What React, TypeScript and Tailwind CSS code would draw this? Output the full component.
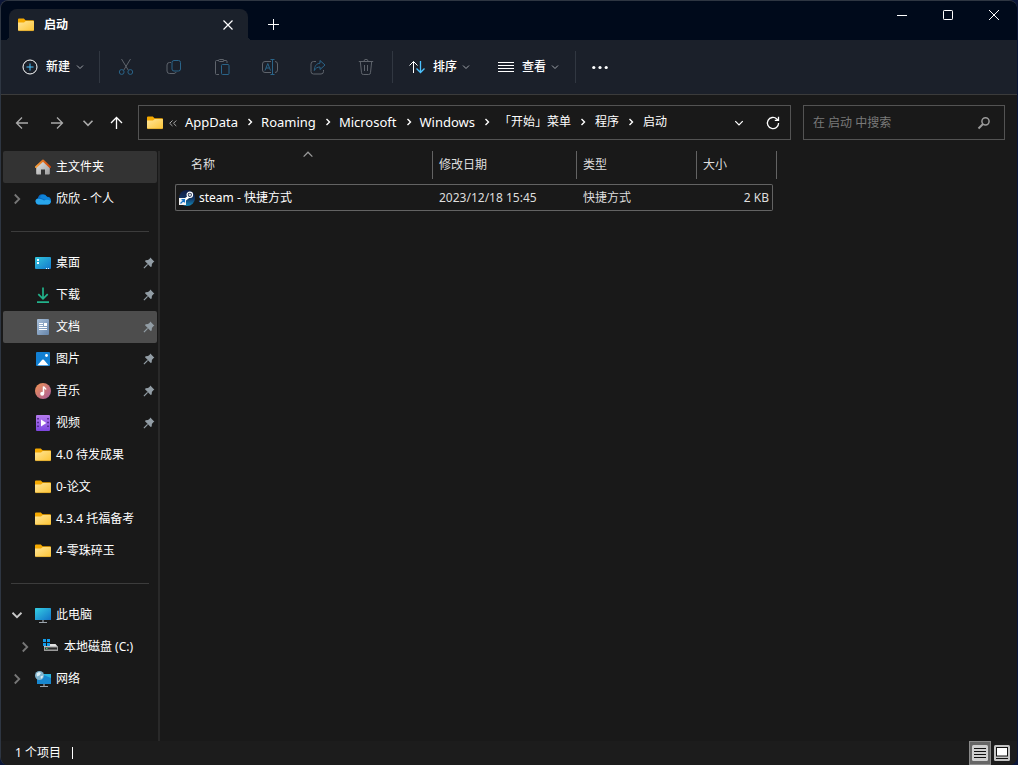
import type { ReactNode } from "react";

const FolderIcon = () => (
    <svg className="size-4 shrink-0" viewBox="0 0 16 16">
        <defs>
            <linearGradient id="folder" x1="0" y1="0" x2="1" y2="1">
                <stop offset="0" stopColor="#ffe69a" />
                <stop offset="1" stopColor="#fcc435" />
            </linearGradient>
        </defs>
        <path d="M0 2.600a1 1 0 0 1 1-1h4.800l1.800 1.600H15a1 1 0 0 1 1 1V8H0z" fill="#f5a900" />
        <path d="M0 5.500h6l1.800-1.500h7.400a.8.8 0 0 1 .8.8V12.800a1.200 1.200 0 0 1-1.200 1.200H1.200A1.200 1.200 0 0 1 0 12.800z" fill="url(#folder)" />
        <path d="M.4 13.600h15.200" stroke="#d9a227" strokeWidth=".7" />
    </svg>
);

const HomeIcon = () => (
    <svg className="size-4 shrink-0" viewBox="0 0 16 16">
        <defs>
            <linearGradient id="wall" x1="0" y1="0" x2="1" y2="1">
                <stop offset="0" stopColor="#e6e6e6" />
                <stop offset="1" stopColor="#9d9d9d" />
            </linearGradient>
            <linearGradient id="roof" x1="0" y1="0" x2="1" y2="0">
                <stop offset="0" stopColor="#f8a13c" />
                <stop offset="1" stopColor="#c8430a" />
            </linearGradient>
        </defs>
        <path d="M1.200 7.500 8 1.800l6.800 5.700v7.100a.9.9 0 0 1-.9.9H10v-5H6v5H2.100a.9.9 0 0 1-.9-.9z" fill="url(#wall)" />
        <path d="M1 8 8 1.500 15 8" fill="none" stroke="url(#roof)" strokeWidth="2" strokeLinecap="round" strokeLinejoin="round" />
    </svg>
);

const CloudIcon = () => (
    <svg className="size-4 shrink-0" viewBox="0 0 16 16">
        <path d="M3.500 13.500a3.400 3.400 0 0 1-.6-6.600A5 5 0 0 1 12 5.800a3.900 3.900 0 0 1 1 7.700z" fill="#0a6cc4" />
        <path d="M6 4.200A5 5 0 0 1 12.100 6a3.900 3.900 0 0 1 3.500 5.200L5 6.500z" fill="#0f83d8" />
        <path d="M3.400 13.500A3.400 3.400 0 0 1 1 8.600C4 7 6.500 8.200 9 9.500c2-1.200 4.500-1.200 6.800.6a3.300 3.300 0 0 1-3 3.400z" fill="#29a7ec" />
    </svg>
);

const DesktopIcon = () => (
    <svg className="size-4 shrink-0" viewBox="0 0 16 16">
        <defs>
            <linearGradient id="screen" x1="0" y1="0" x2="1" y2="1">
                <stop offset="0" stopColor="#33c6dc" />
                <stop offset="1" stopColor="#1277cc" />
            </linearGradient>
        </defs>
        <rect y="2" width="16" height="12" rx="1" fill="url(#screen)" />
        <path d="M2 4h2v2H2zM2 7h2v2H2z" fill="#f2fbff" />
        <path d="M11 13.500h1M13 13.500h1" stroke="#e0f3ff" />
    </svg>
);

const DownloadIcon = () => (
    <svg className="size-4 shrink-0" viewBox="0 0 16 16" fill="none" stroke="#22b28b" strokeWidth="1.700">
        <path d="M8 .5v11M3.300 7.200 8 11.800l4.700-4.600M2 15.200h12" />
    </svg>
);

const DocumentIcon = () => (
    <svg className="size-4 shrink-0" viewBox="0 0 16 16">
        <defs>
            <linearGradient id="paper" x1="0" y1="0" x2="1" y2="1">
                <stop offset="0" stopColor="#a9c0da" />
                <stop offset="1" stopColor="#6685aa" />
            </linearGradient>
        </defs>
        <rect x="2" width="12" height="16" rx="1" fill="url(#paper)" />
        <path d="M4 4.500h4M4 6.500h4M4 8.500h8M4 10.500h8" stroke="#fff" />
        <path d="M9 4h3v3H9z" fill="#fff" />
    </svg>
);

const PictureIcon = () => (
    <svg className="size-4 shrink-0" viewBox="0 0 16 16">
        <rect x="1" y="1" width="14" height="14" rx="1" fill="#1280d3" />
        <path d="M2.500 14.200 7.200 8.800a1.100 1.100 0 0 1 1.600 0l4.700 5.400z" fill="#fff" />
        <circle cx="11.500" cy="4.500" r="1.400" fill="#fff" />
    </svg>
);

const MusicIcon = () => (
    <svg className="size-4 shrink-0" viewBox="0 0 16 16">
        <defs>
            <linearGradient id="disc" x1="0" y1="0" x2="1" y2="1">
                <stop offset="0" stopColor="#f09452" />
                <stop offset="1" stopColor="#a85a9c" />
            </linearGradient>
        </defs>
        <circle cx="8" cy="8" r="8" fill="url(#disc)" />
        <path d="M8.500 10.500v-7c.5 1.500 2 1.500 2.500 3" fill="none" stroke="#fff" strokeWidth="1.500" />
        <circle cx="7.200" cy="10.700" r="2" fill="#fff" />
    </svg>
);

const VideoIcon = () => (
    <svg className="size-4 shrink-0" viewBox="0 0 16 16">
        <defs>
            <linearGradient id="film" x1="0" y1="0" x2="0" y2="1">
                <stop offset="0" stopColor="#b57bee" />
                <stop offset="1" stopColor="#7d46df" />
            </linearGradient>
        </defs>
        <rect x="1" width="14" height="16" rx="1" fill="url(#film)" />
        <path d="M3 3v11M13 3v11" stroke="#42217a" strokeWidth="1.500" strokeDasharray="1.500 2.300" />
        <path d="M6 4.600 11.300 8 6 11.500z" fill="#fff" />
    </svg>
);

const ComputerIcon = () => (
    <svg className="size-4 shrink-0" viewBox="0 0 16 16">
        <defs>
            <linearGradient id="monitor" x1="0" y1="0" x2="1" y2="1">
                <stop offset="0" stopColor="#35cfe3" />
                <stop offset="1" stopColor="#1273c8" />
            </linearGradient>
        </defs>
        <path d="M8 12v3M4 15.500h8" stroke="#9aa3ab" strokeWidth="1.200" />
        <rect y="1" width="16" height="12" rx=".6" fill="url(#monitor)" />
    </svg>
);

const DriveIcon = () => (
    <svg className="size-4 shrink-0" viewBox="0 0 16 16">
        <path d="M0 0h3v3H0zM4 0h3v3H4zM0 4h3v3H0zM4 4h3v3H4z" fill="#139be8" />
        <path d="M7 5h5.500L15 8H1V7h6z" fill="#e3e3e3" />
        <rect x="1" y="7.500" width="14" height="4.500" rx=".6" fill="#9a9a9a" />
        <rect x="2" y="8.500" width="12" height="2" fill="#2b2b2b" />
        <path d="M3 9.500h1.500" stroke="#3ddc6b" />
    </svg>
);

const NetworkIcon = () => (
    <svg className="size-4 shrink-0" viewBox="0 0 16 16">
        <path d="M9 13v2M5 15.500h8" stroke="#9aa3ab" strokeWidth="1.200" />
        <rect x="2" y="3" width="14" height="10" rx=".5" fill="#1887cf" />
        <path d="M6 3h10v4z" fill="#2ab4df" />
        <circle cx="4.500" cy="4.500" r="4.500" fill="#7fb3cd" />
        <path d="M1.500 2.500 4 1l2 1-1.500 2.500L2 5.500zM5.500 5.500l2-1 .5 1.500-2 2z" fill="#d9edf5" />
    </svg>
);

const SteamShortcutIcon = () => (
    <svg className="size-4 shrink-0" viewBox="0 0 16 16">
        <defs>
            <linearGradient id="steam" x1="0" y1="0" x2="0" y2="1">
                <stop offset="0" stopColor="#101c46" />
                <stop offset=".5" stopColor="#12305f" />
                <stop offset="1" stopColor="#1387b8" />
            </linearGradient>
        </defs>
        <circle cx="8" cy="8" r="8" fill="url(#steam)" />
        <path d="m5 10.500 5-4" stroke="#fff" strokeWidth="2.500" />
        <circle cx="10.800" cy="4.800" r="2.700" fill="#1a2749" stroke="#fff" strokeWidth="1.200" />
        <circle cx="10.800" cy="4.800" r="1.300" fill="#d5d9e2" />
        <rect y="8" width="7" height="7" fill="#f4f4f4" />
        <path d="M1.500 13.500 5 10M2.500 9.600h2.900v2.900" fill="none" stroke="#1673c8" strokeWidth="1.200" />
    </svg>
);

const PinIcon = () => (
    <svg className="size-3 shrink-0" viewBox="0 0 12 12">
        <path d="M7.300.6 11.400 4.700 10.300 5.300 8.900 7 8.700 9.500 7.700 10 2 4.300 2.600 3.300 5 3.100 6.700 1.700z" fill="#929da5" />
        <path d="M4.600 7.400.9 11.100" stroke="#929da5" strokeWidth="1.200" />
    </svg>
);

const Chevron = ({ className, d = "m1 2.500 3 3 3-3" }: { className: string; d?: string }) => (
    <svg className={className} viewBox="0 0 8 8" fill="none" stroke="currentColor">
        <path d={d} />
    </svg>
);

const RIGHT = "m2.500 1 3 3-3 3";

const Stroke = ({ children }: { children: ReactNode }) => (
    <svg className="size-4 shrink-0" viewBox="0 0 16 16" fill="none" stroke="currentColor">
        {children}
    </svg>
);

const BLUE = "#2a6489";

const tools = [
    {
        label: "剪切",
        icon: (
            <>
                <path d="M3.500 0 10.200 11M12.500 0 5.800 11" />
                <circle cx="3.700" cy="13" r="2.400" stroke={BLUE} />
                <circle cx="12.300" cy="13" r="2.400" stroke={BLUE} />
            </>
        ),
    },
    {
        label: "复制",
        icon: (
            <>
                <path d="M5 3.500H3.500A2.500 2.500 0 0 0 1 6v6a2.500 2.500 0 0 0 2.500 2.500H8a2.500 2.500 0 0 0 2.200-1.500" />
                <rect x="6" y="1.500" width="8.500" height="10.500" rx="2" stroke={BLUE} />
            </>
        ),
    },
    {
        label: "粘贴",
        icon: (
            <>
                <path d="M5 15.500H2.500a1 1 0 0 1-1-1v-12a1 1 0 0 1 1-1H5M9.500 1.500H12a1 1 0 0 1 1 1V4" />
                <rect x="4.500" y=".5" width="5.500" height="2" rx="1" />
                <rect x="7.500" y="5.500" width="7.500" height="10" rx="1" stroke={BLUE} />
            </>
        ),
    },
    {
        label: "重命名",
        icon: (
            <>
                <path d="M9 2.500H3A2.500 2.500 0 0 0 .5 5v6A2.500 2.500 0 0 0 3 13.500h6M13 2.500A2.500 2.500 0 0 1 15.500 5v6a2.500 2.500 0 0 1-2.500 2.500" />
                <path d="M3 11.500 5.800 4.500l2.700 7M4 9h3.600M8.500.5h4M8.500 15.500h4M10.500.5v15" stroke={BLUE} />
            </>
        ),
    },
    {
        label: "共享",
        icon: (
            <>
                <path d="M6 2.500H3.500A2.500 2.500 0 0 0 1 5v7.500A2.500 2.500 0 0 0 3.500 15H11a2.500 2.500 0 0 0 2.500-2.500V11" />
                <path d="M10 1.500 15 6l-5 4.500V8C7.500 8 5.500 9 4.300 11.500 4.500 7 6.500 4.500 10 4.200z" stroke={BLUE} strokeLinejoin="round" />
            </>
        ),
    },
    {
        label: "删除",
        icon: (
            <path d="M.8 2.500h14.400M2.300 2.500l1.200 11.200a1.800 1.800 0 0 0 1.800 1.800h5.400a1.800 1.800 0 0 0 1.800-1.800L13.700 2.500M6 2.300a2 2 0 0 1 4 0M6.500 6v6M9.500 6v6" />
        ),
    },
];

const crumbs = [
    { name: "AppData", latin: true },
    { name: "Roaming", latin: true },
    { name: "Microsoft", latin: true },
    { name: "Windows", latin: true },
    { name: "「开始」菜单", latin: false },
    { name: "程序", latin: false },
    { name: "启动", latin: false },
];

type Item = {
    label: string;
    icon: ReactNode;
    pinned?: boolean;
    arrow?: "right" | "down";
    active?: "home" | "current";
    nested?: boolean;
};

const groups: Item[][] = [
    [
        { label: "主文件夹", icon: <HomeIcon />, active: "home" },
        { label: "欣欣 - 个人", icon: <CloudIcon />, arrow: "right" },
    ],
    [
        { label: "桌面", icon: <DesktopIcon />, pinned: true },
        { label: "下载", icon: <DownloadIcon />, pinned: true },
        { label: "文档", icon: <DocumentIcon />, pinned: true, active: "current" },
        { label: "图片", icon: <PictureIcon />, pinned: true },
        { label: "音乐", icon: <MusicIcon />, pinned: true },
        { label: "视频", icon: <VideoIcon />, pinned: true },
        { label: "4.0 待发成果", icon: <FolderIcon /> },
        { label: "0-论文", icon: <FolderIcon /> },
        { label: "4.3.4 托福备考", icon: <FolderIcon /> },
        { label: "4-零珠碎玉", icon: <FolderIcon /> },
    ],
    [
        { label: "此电脑", icon: <ComputerIcon />, arrow: "down" },
        { label: "本地磁盘 (C:)", icon: <DriveIcon />, arrow: "right", nested: true },
        { label: "网络", icon: <NetworkIcon />, arrow: "right" },
    ],
];

const rowStyles = {
    home: "bg-[#333333]",
    current: "bg-[#4d4d4d]",
};

const NavItem = ({ item }: { item: Item }) => (
    <li className={`flex h-8 items-center rounded-xs pr-[2px] ${item.nested ? "pl-4" : "pl-2"} ${item.active ? rowStyles[item.active] : ""}`}>
        <span className="flex w-6 shrink-0">
            {item.arrow && (
                <button
                    aria-label={`展开 ${item.label}`}
                    className={item.arrow === "down" ? "text-[#c8c8c8]" : "text-[#777777]"}
                >
                    <Chevron className="size-3 stroke-[1.2]" d={item.arrow === "right" ? RIGHT : undefined} />
                </button>
            )}
        </span>
        <a href="#" className="flex flex-1 items-center gap-[5px] whitespace-nowrap">
            {item.icon}
            {item.label}
        </a>
        {item.pinned && <PinIcon />}
    </li>
);

const TitleBar = () => (
    <header className="flex h-[39px] items-end bg-[#000a1b]">
        <div className="relative ml-2 flex h-[31px] w-[239px] items-center rounded-t-lg bg-[#1b212b] pr-[14px] pl-[9px]">
            <span className="absolute bottom-0 -left-1 size-1 bg-[radial-gradient(circle_at_top_left,transparent_4px,#1b212b_4px)]" />
            <span className="absolute -right-1 bottom-0 size-1 bg-[radial-gradient(circle_at_top_right,transparent_4px,#1b212b_4px)]" />
            <FolderIcon />
            <h1 className="ml-[10px] flex-1 font-bold">启动</h1>
            <button aria-label="关闭标签页" className="p-px">
                <svg className="size-[10px]" viewBox="0 0 10 10" stroke="currentColor" strokeWidth="1.200">
                    <path d="m.5.5 9 9m0-9-9 9" />
                </svg>
            </button>
        </div>
        <button aria-label="新建标签页" className="ml-5 flex h-8 items-center">
            <svg className="size-[11px]" viewBox="0 0 11 11" stroke="currentColor">
                <path d="M5.500 0v11M0 5.500h11" />
            </svg>
        </button>
        <div className="ml-auto flex self-start">
            <button aria-label="最小化" className="flex h-7 w-[46px] items-center justify-center">
                <svg className="size-[10px]" viewBox="0 0 10 10" stroke="currentColor">
                    <path d="M0 5.500h10" />
                </svg>
            </button>
            <button aria-label="最大化" className="flex h-7 w-[46px] items-center justify-center">
                <svg className="size-[10px]" viewBox="0 0 10 10" fill="none" stroke="currentColor">
                    <rect x=".5" y=".5" width="9" height="9" rx=".7" />
                </svg>
            </button>
            <button aria-label="关闭" className="flex h-7 w-[46px] items-center justify-center">
                <svg className="size-[10px]" viewBox="0 0 10 10" stroke="currentColor">
                    <path d="m0 0 10 10M10 0 0 10" />
                </svg>
            </button>
        </div>
    </header>
);

const Divider = () => <span className="mx-[2px] h-8 w-px bg-[#313741]" />;

const Toolbar = () => (
    <div className="flex h-[55px] items-center border-b border-[#3b3b3b] bg-[#1b202a] pl-[10px]">
        <button className="mr-1 flex h-8 items-center gap-2 pr-[9px] pl-[11px] font-medium">
            <Stroke>
                <circle cx="8" cy="8" r="7" />
                <path d="M8 4.500v7M4.500 8h7" stroke="#4cc2ff" />
            </Stroke>
            新建
            <Chevron className="-ml-[2px] size-2 text-[#a0a4aa]" />
        </button>
        <Divider />
        {tools.map((tool) => (
            <button key={tool.label} aria-label={tool.label} disabled className="flex h-8 w-12 items-center justify-center text-[#5f646c]">
                <Stroke>{tool.icon}</Stroke>
            </button>
        ))}
        <Divider />
        <button className="flex h-8 items-center gap-2 px-[14px] font-medium">
            <Stroke>
                <path d="M4.500 14V2.500M.5 6.500l4-4 4 4" />
                <path d="M11.500 2v11.500M7.500 9.500l4 4 4-4" stroke="#4cc2ff" strokeWidth="1.300" />
            </Stroke>
            排序
            <Chevron className="-ml-[3px] size-2 text-[#a0a4aa]" />
        </button>
        <button className="flex h-8 items-center gap-2 px-[14px] font-medium">
            <Stroke>
                <path d="M0 3.500h16M0 6.500h16M0 9.500h16M0 12.500h16" />
            </Stroke>
            查看
            <Chevron className="-ml-[3px] size-2 text-[#a0a4aa]" />
        </button>
        <Divider />
        <button aria-label="查看更多" className="flex h-8 items-center px-[14px]">
            <svg className="size-4" viewBox="0 0 16 16" fill="currentColor">
                <circle cx="1.800" cy="8.500" r="1.600" />
                <circle cx="8" cy="8.500" r="1.600" />
                <circle cx="14.200" cy="8.500" r="1.600" />
            </svg>
        </button>
    </div>
);

const AddressRow = () => (
    <div className="flex h-14 items-center pr-3 pb-px pl-[13px]">
        <div className="flex w-[124px] items-center">
            <button aria-label="后退" className="mr-[19px] text-[#a9a9a9]">
                <Stroke>
                    <path d="M14 8H2.500M8 2.500 2.500 8 8 13.500" strokeWidth="1.300" />
                </Stroke>
            </button>
            <button aria-label="前进" className="mr-[17px] text-[#a9a9a9]">
                <Stroke>
                    <path d="M2 8h11.500M8 2.500 13.500 8 8 13.500" strokeWidth="1.300" />
                </Stroke>
            </button>
            <button aria-label="最近浏览的位置" className="mr-[14px] text-[#a9a9a9]">
                <Chevron className="size-3 stroke-[1.1]" />
            </button>
            <button aria-label="向上">
                <Stroke>
                    <path d="M8.500 14V2.500M3 8l5.500-5.500L14 8" strokeWidth="1.300" />
                </Stroke>
            </button>
        </div>
        <nav aria-label="地址" className="mr-3 flex h-[35px] flex-1 items-center border border-[#535353] pr-[10px] pl-2 whitespace-nowrap">
            <FolderIcon />
            <svg className="mr-2 ml-[6px] size-2" viewBox="0 0 8 8" fill="none" stroke="#a9a9a9">
                <path d="M3.500 1.500.7 4.300l2.800 2.700M7.300 1.500 4.500 4.300 7.300 7" />
            </svg>
            <ol className="flex">
                {crumbs.map((crumb, i) => (
                    <li key={crumb.name} className="flex items-center">
                        {i > 0 && <Chevron className={`ml-2 size-2 stroke-[1.4] ${crumb.latin ? "mr-[7px]" : "mr-2"}`} d={RIGHT} />}
                        <a href="#" className={crumb.latin ? "text-[13px]" : ""}>
                            {crumb.name}
                        </a>
                    </li>
                ))}
            </ol>
            <button aria-label="以前的位置" className="mr-[22px] ml-auto">
                <Chevron className="size-[10px]" />
            </button>
            <button aria-label="刷新">
                <svg className="size-[14px]" viewBox="0 0 14 14" fill="none" stroke="currentColor" strokeWidth="1.300">
                    <path d="M12.600 7A5.600 5.600 0 1 1 10.800 2.900L12.500 4.300M12.500.8v3.600H8.800" />
                </svg>
            </button>
        </nav>
        <form role="search" className="flex h-[35px] w-[202px] items-center border border-[#535353] pr-[13px] pl-[9px]">
            <input
                type="search"
                aria-label="搜索"
                placeholder="在 启动 中搜索"
                className="min-w-0 flex-1 bg-transparent outline-none placeholder:text-[#7a7a7a]"
            />
            <svg className="size-[14px]" viewBox="0 0 14 14" fill="none" stroke="#9a9a9a">
                <circle cx="8.500" cy="5.300" r="3.600" strokeWidth="1.500" />
                <path d="M6 8 1.500 12.500" strokeWidth="2" />
            </svg>
        </form>
    </div>
);

const Sidebar = () => (
    <aside className="w-[159px] shrink-0 border-r-2 border-[#292929] pr-px pl-[2px]">
        {groups.map((items, i) => (
            <ul key={i}>
                {i > 0 && <li role="separator" className="mx-2 mt-4 mb-[15px] h-px bg-[#3c3c3c]" />}
                {items.map((item) => (
                    <NavItem key={item.label} item={item} />
                ))}
            </ul>
        ))}
    </aside>
);

const FileTable = () => (
    <table className="ml-[15px] w-[602px] table-fixed border-separate border-spacing-0 self-start text-left">
        <colgroup>
            <col className="w-[258px]" />
            <col className="w-[144px]" />
            <col className="w-[120px]" />
            <col className="w-[76px]" />
            <col className="w-1" />
        </colgroup>
        <thead className="text-[#dedede]">
            <tr className="h-[33px] align-top">
                <th className="relative p-0 font-normal">
                    <div className="flex h-7 items-center border-r border-[#636363] pl-4">名称</div>
                    <Chevron className="absolute top-0 left-32 size-[10px] text-[#9a9a9a]" d="m.5 4.500 3.500-3.500L7.500 4.500" />
                </th>
                <th className="p-0 font-normal">
                    <div className="flex h-7 items-center border-r border-[#636363] pl-[6px]">修改日期</div>
                </th>
                <th className="p-0 font-normal">
                    <div className="flex h-7 items-center border-r border-[#636363] pl-[6px]">类型</div>
                </th>
                <th colSpan={2} className="p-0 font-normal">
                    <div className="flex h-7 items-center border-r border-[#636363] pl-[6px]">大小</div>
                </th>
            </tr>
        </thead>
        <tbody>
            <tr className="h-[27px]">
                <td className="rounded-l-xs border-y border-l border-[#636363] p-0 pl-[3px]">
                    <a href="#" className="flex items-center gap-1">
                        <SteamShortcutIcon />
                        steam - 快捷方式
                    </a>
                </td>
                <td className="border-y border-[#636363] p-0 pl-[6px] text-[#dedede]">2023/12/18 15:45</td>
                <td className="border-y border-[#636363] p-0 pl-[6px] text-[#dedede]">快捷方式</td>
                <td className="rounded-r-xs border-y border-r border-[#636363] p-0 pr-[3px] text-right text-[#dedede]">2 KB</td>
                <td className="p-0" />
            </tr>
        </tbody>
    </table>
);

const StatusBar = () => (
    <footer className="flex h-6 items-center bg-[#1c1c1c] pr-[7px] pl-[14px]">
        <span>1 个项目</span>
        <span className="ml-[11px] h-3 w-px bg-white" />
        <div className="ml-auto flex items-center gap-[3px]">
            <button aria-label="详细信息" className="flex h-6 w-[22px] items-center justify-center border border-[#8a8a8a] bg-[#666666]">
                <svg className="size-4" viewBox="0 0 16 16">
                    <rect width="16" height="16" rx="1.500" fill="#cfcfcf" />
                    <path d="M2 3.500h12M2 6.500h12M2 9.500h12M2 12.500h12" stroke="#111" />
                </svg>
            </button>
            <button aria-label="大图标" className="pb-px">
                <svg className="size-4" viewBox="0 0 16 16">
                    <rect width="16" height="16" rx="1.500" fill="#c4c4c4" />
                    <rect x="2.500" y="2.500" width="11" height="8.500" fill="#fff" stroke="#111" />
                    <path d="M2 13.500h12" stroke="#111" />
                </svg>
            </button>
        </div>
    </footer>
);

const App = () => {
    return (
        <div className="flex min-h-screen flex-col bg-[#0b1638] pr-px font-['Noto_Sans','Noto_Sans_CJK_SC',sans-serif] text-xs text-white">
            <div className="flex flex-1 flex-col overflow-hidden rounded-lg border-t border-l border-[#2e3642] bg-[#191919]">
                <TitleBar />
                <Toolbar />
                <AddressRow />
                <main className="flex flex-1">
                    <Sidebar />
                    <FileTable />
                </main>
                <StatusBar />
            </div>
        </div>
    );
};

export default App;
